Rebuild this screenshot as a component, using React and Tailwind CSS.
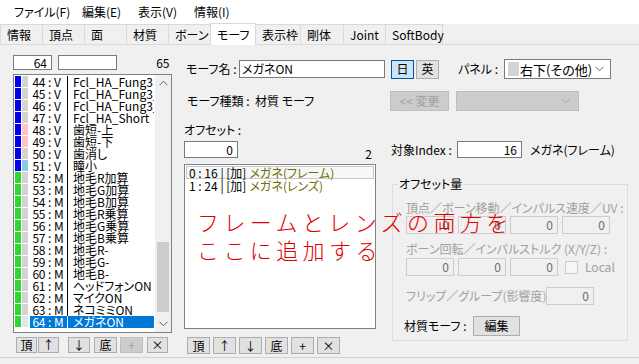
import React from 'react';

const ROWS = [
  [44, 'V', 'Fcl_HA_Fung3', '#d3d3d3'],
  [45, 'V', 'Fcl_HA_Fung3_L', '#d3d3d3'],
  [46, 'V', 'Fcl_HA_Fung3_L', '#d3d3d3'],
  [47, 'V', 'Fcl_HA_Short', '#d3d3d3'],
  [48, 'V', '歯短-上', '#ffc0cb'],
  [49, 'V', '歯短-下', '#ffc0cb'],
  [50, 'V', '歯消し', '#d3d3d3'],
  [51, 'V', '瞳小', '#87cbe8'],
  [52, 'M', '地毛R加算', '#d3d3d3'],
  [53, 'M', '地毛G加算', '#d3d3d3'],
  [54, 'M', '地毛B加算', '#d3d3d3'],
  [55, 'M', '地毛R乗算', '#d3d3d3'],
  [56, 'M', '地毛G乗算', '#d3d3d3'],
  [57, 'M', '地毛B乗算', '#d3d3d3'],
  [58, 'M', '地毛R-', '#d3d3d3'],
  [59, 'M', '地毛G-', '#d3d3d3'],
  [60, 'M', '地毛B-', '#d3d3d3'],
  [61, 'M', 'ヘッドフォンON', '#d3d3d3'],
  [62, 'M', 'マイクON', '#d3d3d3'],
  [63, 'M', 'ネコミミON', '#d3d3d3'],
  [64, 'M', 'メガネON', '#dfe6ee'],
];

const TABS = [
  ['情報', 42], ['頂点', 42], ['面', 42], ['材質', 42], ['ボーン', 42],
  ['モーフ', 45], ['表示枠', 45], ['剛体', 43], ['Joint', 42], ['SoftBody', 57],
];

function Box({ w, h = 18, value, disabled, className = '' }) {
  return (
    <div
      className={`flex shrink-0 items-center justify-end pr-[4px] border ${disabled ? 'bg-[#f0f0f0] border-[#cccccc] text-[#6d6d6d]' : 'bg-white border-[#7a7a7a]'} ${className}`}
      style={{ width: w, height: h }}
    >
      {value}
    </div>
  );
}

function Btn({ children, w, h = 16, disabled, className = '' }) {
  return (
    <div
      className={`flex shrink-0 items-center justify-center border ${disabled ? 'bg-[#cccccc] border-[#bfbfbf] text-[#a0a0a0]' : 'bg-[#e1e1e1] border-[#adadad]'} ${className}`}
      style={{ width: w, height: h }}
    >
      {children}
    </div>
  );
}

function Chevron({ color = '#606060' }) {
  return (
    <svg width="9" height="6" viewBox="0 0 9 6" fill="none">
      <path d="M0.5 0.8 L4.5 4.8 L8.5 0.8" stroke={color} strokeWidth="1" />
    </svg>
  );
}

function MorphList() {
  return (
    <div className="relative mt-[4px] h-[259px] w-[159px] border border-[#828282] bg-white overflow-hidden">
      <div className="pt-[1px]">
        {ROWS.map(([n, k, name, c2]) => {
          const sel = n === 64;
          return (
            <div key={n} className="flex h-[12px] w-[140px] items-stretch">
              <div className="ml-[1px] w-[6px] mb-[1px] shrink-0" style={{ background: k === 'V' ? '#0000ee' : '#2fd82f' }} />
              <div className="ml-[1px] w-[6px] mb-[1px] shrink-0" style={{ background: c2 }} />
              <div className={`ml-[2px] flex flex-1 min-w-0 ${sel ? 'bg-[#0078d7] text-white' : ''}`}>
                <div className="w-[37px] shrink-0 flex items-center pl-[2px] tracking-[-0.4px]">
                  <span className="w-[13px] text-right">{n}</span>
                  <span className="ml-[3px]">:</span>
                  <span className="ml-[3px]">{k}</span>
                </div>
                <div className={`w-[1px] shrink-0 ${sel ? 'bg-white' : 'bg-black'}`} />
                <div className="pl-[5px] flex-1 min-w-0 flex items-center whitespace-nowrap overflow-x-clip">{name}</div>
              </div>
            </div>
          );
        })}
      </div>
      <div className="absolute right-0 top-0 bottom-0 w-[16px] bg-[#f0f0f0] flex flex-col items-center">
        <div className="h-[17px] flex items-center justify-center rotate-180"><Chevron /></div>
        <div className="flex-1 w-full flex flex-col">
          <div className="h-[150px]" />
          <div className="h-[70px] mx-[2px] bg-[#cdcdcd]" />
        </div>
        <div className="h-[17px] flex items-center justify-center"><Chevron /></div>
      </div>
    </div>
  );
}

function OffsetList() {
  return (
    <div className="mt-[6px] h-[165px] w-[192px] border border-[#828282] bg-white pt-[1px] px-[1px]">
      <div className="h-[13px] flex items-center border border-[#c8c8c8] bg-[#f7f7f7] pl-[2px] whitespace-nowrap">
        <span>0 : 16 | [加]</span><span className="ml-[3px] text-[#6d6d00]">メガネ(フレーム)</span>
      </div>
      <div className="h-[13px] flex items-center pl-[3px] whitespace-nowrap">
        <span>1 : 24 | [加]</span><span className="ml-[3px] text-[#6d6d00]">メガネ(レンズ)</span>
      </div>
    </div>
  );
}

export default function App() {
  const leftBtns = [
    ['頂', 3, 21], ['↑', 1, 21], ['↓', 9, 22], ['底', 4, 23], ['+', 3, 23, true], ['×', 4, 21],
  ];
  const midBtns = ['頂', '↑', '↓', '底', '+', '×'];
  return (
    <div className="relative w-[639px] h-[364px] overflow-hidden bg-[#f0f0f0] text-[12px] leading-none text-black font-['Noto_Sans_CJK_JP','Noto_Sans',sans-serif] [font-feature-settings:'palt']">
      {/* menu */}
      <div className="h-[24px] bg-white flex items-center pl-[14px]">
        <div className="w-[68px]">ファイル(F)</div>
        <div className="w-[56px]">編集(E)</div>
        <div className="w-[56px]">表示(V)</div>
        <div>情報(I)</div>
      </div>
      {/* tabs */}
      <div className="h-[21px] flex items-end border-b border-[#dadada] bg-[#f0f0f0]">
        {TABS.map(([t, w]) => {
          const sel = t === 'モーフ';
          return (
            <div
              key={t}
              className={`flex items-center pl-[6px] border-[#d9d9d9] border-l border-t border-r -mr-[1px] ${sel ? 'h-[22px] bg-white relative z-10 -mb-[1px]' : 'h-[20px] bg-[#f0f0f0]'}`}
              style={{ width: w + 1 }}
            >
              {t}
            </div>
          );
        })}
      </div>

      <div className="flex h-[313px] border-b border-[#d0d0d0]">
        {/* left */}
        <div className="ml-[13px] w-[159px] pt-[10px]">
          <div className="flex h-[15px] items-center">
            <Box w={39} h={15} value="64" />
            <Box w={59} h={15} value="" className="ml-[6px]" />
            <div className="ml-auto mr-[3px] tracking-[-0.3px]">65</div>
          </div>
          <MorphList />
          <div className="flex mt-[4px]">
            {leftBtns.map(([t, ml, w, dis]) => (
              <div key={t} style={{ marginLeft: ml }}>
                <Btn w={w} h={16} disabled={dis}>{t}</Btn>
              </div>
            ))}
          </div>
        </div>

        {/* middle + right */}
        <div className="ml-[12px] pt-[14px] flex flex-col">
          <div className="flex items-center h-[20px]">
            <div className="w-[55px] pl-[2px]">モーフ名 :</div>
            <div className="w-[146px] h-[18px] border border-[#7a7a7a] bg-white flex items-center pl-[2px]">メガネON</div>
            <Btn w={23} h={19} className="ml-[6px] !bg-[#cce4f7] !border-[#005499]">日</Btn>
            <Btn w={23} h={19} className="ml-[2px]">英</Btn>
            <div className="ml-[19px] w-[46px]">パネル :</div>
            <div className="w-[107px] h-[20px] border border-[#7a7a7a] bg-white flex items-center pl-[3px]">
              <div className="w-[11px] h-[14px] bg-[#d3d3d3]" />
              <span className="ml-[1px] text-[13px]">右下(その他)</span>
              <span className="ml-auto mr-[6px]"><Chevron color="#707070" /></span>
            </div>
          </div>
          <div className="flex items-center h-[20px] mt-[12px]">
            <div className="w-[71px] pl-[3px]">モーフ種類 :</div>
            <div className="w-[135px]">材質 モーフ</div>
            <Btn w={59} h={20} disabled><span className="text-[#a0a0a0]">&lt;&lt; 変更</span></Btn>
            <div className="ml-[7px] w-[123px] h-[20px] border border-[#bfbfbf] bg-[#cccccc] flex items-center justify-end pr-[8px]"><Chevron color="#a0a0a0" /></div>
          </div>

          <div className="flex">
            {/* middle column */}
            <div className="w-[192px] flex flex-col">
              <div className="mt-[13px] h-[12px]">オフセット :</div>
              <div className="mt-[5px] flex items-end">
                <Box w={54} h={17} value="0" />
                <div className="ml-auto mr-[4px] -mb-[2px]">2</div>
              </div>
              <OffsetList />
              <div className="flex mt-[8px] ml-[3px] gap-[3px]">
                {midBtns.map((t) => (
                  <Btn key={t} w={23} h={17}>{t}</Btn>
                ))}
              </div>
            </div>
            {/* right column */}
            <div className="ml-[15px] w-[237px] flex flex-col">
              <div className="mt-[30px] flex items-center h-[17px]">
                <div className="w-[66px]">対象Index :</div>
                <Box w={65} h={17} value="16" />
                <div className="ml-[8px]">メガネ(フレーム)</div>
              </div>
              <div className="relative mt-[26px] ml-[1px] w-[236px] h-[157px] border border-[#dcdcdc] pl-[13px]">
                <div className="absolute -top-[7px] left-[5px] px-[1px] bg-[#f0f0f0]">オフセット量</div>
                <div className="mt-[17px] text-[#a0a0a0] whitespace-nowrap">頂点／ボーン移動／インパルス速度／UV :</div>
                <div className="flex gap-[4px] mt-[2px]">
                  {[0, 1, 2, 3].map((i) => <Box key={i} w={48} h={18} value="0" disabled />)}
                </div>
                <div className="mt-[9px] text-[#a0a0a0] whitespace-nowrap">ボーン回転／インパルストルク (X/Y/Z) :</div>
                <div className="flex gap-[4px] mt-[3px] items-center">
                  {[0, 1, 2].map((i) => <Box key={i} w={48} h={18} value="0" disabled />)}
                  <div className="ml-[3px] w-[13px] h-[13px] border border-[#cccccc] bg-[#f7f7f7]" />
                  <div className="ml-[3px] text-[#a0a0a0]">Local</div>
                </div>
                <div className="flex items-center mt-[11px] h-[18px]">
                  <div className="w-[140px] text-[#a0a0a0] whitespace-nowrap">フリップ／グループ(影響度) :</div>
                  <Box w={48} h={18} value="0" disabled />
                </div>
                <div className="flex items-center mt-[11px] h-[20px] -ml-[2px]">
                  <div className="w-[69px]">材質モーフ :</div>
                  <Btn w={47} h={20}>編集</Btn>
                </div>
              </div>
            </div>
          </div>
        </div>
      </div>

      {/* annotation */}
      <div className="absolute left-[197px] top-[207px] text-[22px] leading-[28px] tracking-[4.4px] text-[#e00000] font-light [font-feature-settings:normal] whitespace-nowrap">
        <div>フレームとレンズの両方を</div>
        <div>ここに追加する</div>
      </div>
    </div>
  );
}
